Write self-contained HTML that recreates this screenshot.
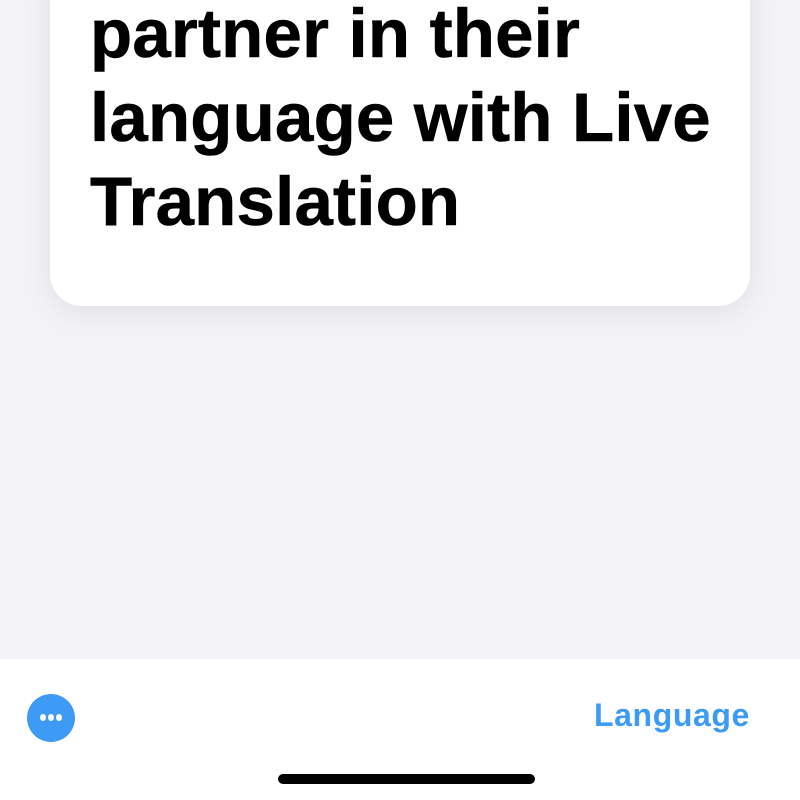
<!DOCTYPE html>
<html><head><style>
html,body{margin:0;padding:0;width:800px;height:800px;overflow:hidden;background:#f2f2f7;font-family:"Liberation Sans",sans-serif;}
.card{position:absolute;left:50px;top:-40px;width:700px;height:346px;background:#fff;border-radius:32px;box-shadow:0 6px 30px rgba(0,0,0,0.08);}
.t{position:absolute;left:90px;top:0;font-weight:bold;font-size:69px;line-height:84px;color:#000;letter-spacing:0.2px;white-space:nowrap;-webkit-text-stroke:0.6px #000;}
.bar{position:absolute;left:0;top:659px;width:800px;height:141px;background:#fff;}
.dots{position:absolute;left:27px;top:694px;width:48px;height:48px;border-radius:50%;background:#3d9bf5;}
.dots i{position:absolute;top:20px;width:6px;height:7px;border-radius:50%;background:#fff;}
.lang{position:absolute;left:594px;top:697px;font-size:32px;font-weight:bold;color:#3d9bf5;letter-spacing:0.6px;}
.home{position:absolute;left:278px;top:774px;width:257px;height:10px;border-radius:5px;background:#000;}
</style></head><body>
<div class="card"></div>
<div class="t" style="top:-8px">partner in their<br>language with Live<br>Translation</div>
<div class="bar"></div>
<div class="dots"><i style="left:13px"></i><i style="left:21px"></i><i style="left:29px"></i></div>
<div class="lang">Language</div>
<div class="home"></div>
</body></html>
